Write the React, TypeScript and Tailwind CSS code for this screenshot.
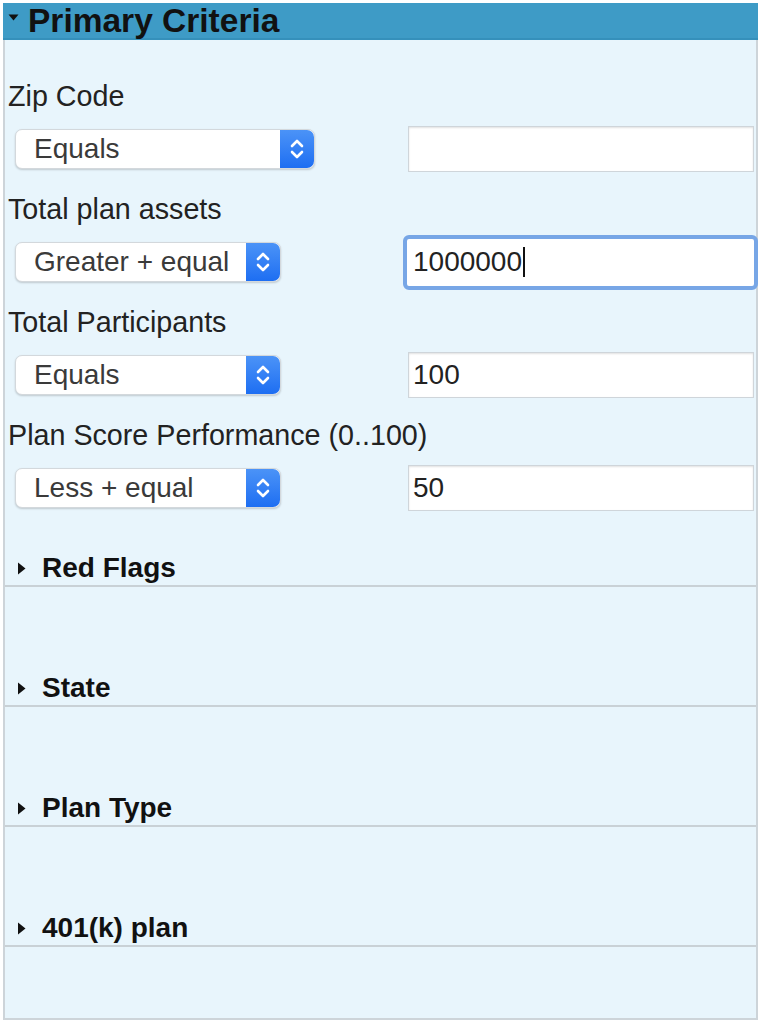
import React from 'react';

type Criterion = {
  label: string;
  op: string;
  selectWidth: string;
  value: string;
  focused?: boolean;
};

const criteria: Criterion[] = [
  { label: 'Zip Code', op: 'Equals', selectWidth: 'w-[300px]', value: '' },
  { label: 'Total plan assets', op: 'Greater + equal', selectWidth: 'w-[266px]', value: '1000000', focused: true },
  { label: 'Total Participants', op: 'Equals', selectWidth: 'w-[266px]', value: '100' },
  { label: 'Plan Score Performance (0..100)', op: 'Less + equal', selectWidth: 'w-[266px]', value: '50' },
];

const sections = ['Red Flags', 'State', 'Plan Type', '401(k) plan'];

const Stepper = () => (
  <div className="w-[34px] h-full rounded-r-[7px] bg-gradient-to-b from-[#4b93f7] to-[#1d6ef2] flex items-center justify-center">
    <svg width="16" height="26" viewBox="0 0 16 26" fill="none" stroke="white" strokeWidth="2.6" strokeLinecap="round" strokeLinejoin="round">
      <path d="M3 10 L8 5 L13 10" />
      <path d="M3 16 L8 21 L13 16" />
    </svg>
  </div>
);

const FakeSelect = ({ op, width }: { op: string; width: string }) => (
  <div className={`${width} h-[40px] flex bg-white rounded-[7px] border border-[#d3d8dc] shadow-[0_1px_2px_rgba(0,0,0,0.18)]`}>
    <div className="flex-1 flex items-center pl-[18px] text-[28px] text-[#3a3a3a] leading-none">{op}</div>
    <Stepper />
  </div>
);

const FakeInput = ({ value, focused }: { value: string; focused?: boolean }) =>
  focused ? (
    <div className="w-[355px] h-[55px] -ml-[5px] -mr-[4px] rounded-[6px] border-[4px] border-[#77a6e6] bg-white flex items-center pl-[6px]">
      <span className="text-[28px] text-[#222] leading-none">{value}</span>
      <span className="w-[2px] h-[30px] bg-[#111] ml-[1px]" />
    </div>
  ) : (
    <div className="w-[346px] h-[46px] bg-white border border-[#cfd5da] shadow-[inset_0_1px_2px_rgba(0,0,0,0.12)] flex items-center pl-[4px]">
      <span className="text-[28px] text-[#222] leading-none">{value}</span>
    </div>
  );

const RightTriangle = () => (
  <svg width="9" height="13" viewBox="0 0 9 13" className="shrink-0">
    <path d="M1 0.5 L8.5 6.5 L1 12.5 Z" fill="#111" />
  </svg>
);

export default function App() {
  return (
    <div
      className="w-[763px] h-[1024px] bg-white pt-[3px] pl-[3px] pr-[5px]"
      style={{ fontFamily: '"Liberation Sans", Helvetica, Arial, sans-serif' }}
    >
      {/* header */}
      <div className="h-[37px] bg-[#3e9bc6] border-b-2 border-[#3590bb] flex items-center pl-[5px]">
        <svg width="11" height="7" viewBox="0 0 11 7" className="mr-[9px] -mt-[6px]">
          <path d="M0.5 0.5 L10.5 0.5 L5.5 6.5 Z" fill="#111" />
        </svg>
        <span className="text-[33.5px] font-bold text-[#111] leading-none">Primary Criteria</span>
      </div>

      {/* body */}
      <div className="h-[980px] bg-[#e8f5fc] border-x-2 border-b-2 border-[#cdd4d9] flex flex-col">
        <div className="pt-[40px] flex flex-col">
          {criteria.map(c => (
            <div key={c.label} className="flex flex-col mb-[21px]">
              <div className="pl-[3px] h-[32px] flex items-center text-[28.7px] text-[#222] leading-none">{c.label}</div>
              <div className="mt-[14px] h-[46px] flex items-center pl-[10px] pr-[2px]">
                <FakeSelect op={c.op} width={c.selectWidth} />
                <div className="flex-1" />
                <FakeInput value={c.value} focused={c.focused} />
              </div>
            </div>
          ))}
        </div>

        {sections.map((s, i) => (
          <div
            key={s}
            className={`${i === 0 ? 'h-[55px]' : 'h-[120px]'} flex items-end border-b-2 border-[#c9d1d6]`}
          >
            <div className="h-[34px] flex items-center pl-[12px] gap-[16px]">
              <RightTriangle />
              <span className="text-[28px] font-bold text-[#111] leading-none">{s}</span>
            </div>
          </div>
        ))}
      </div>
    </div>
  );
}
